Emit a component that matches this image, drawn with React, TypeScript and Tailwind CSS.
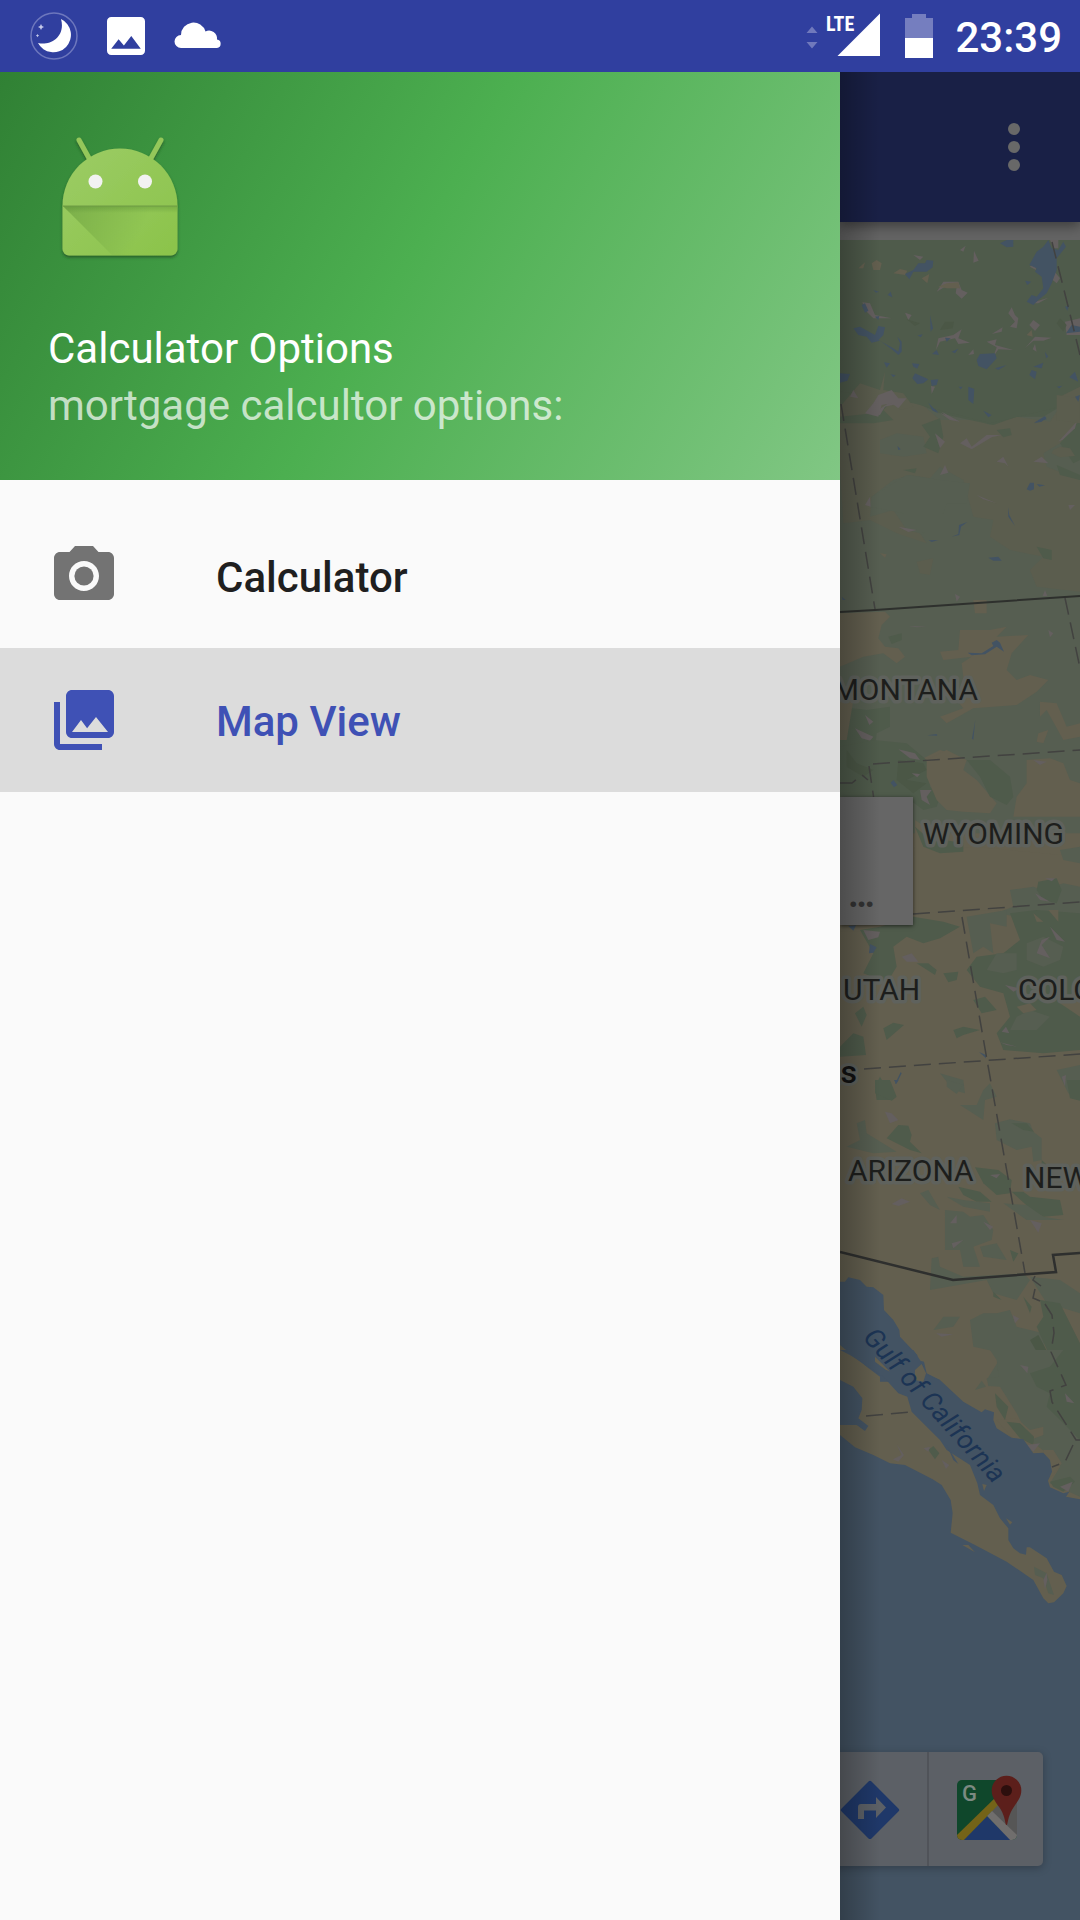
import React from "react";

const FOREST = "#4f5b4b";
const DEEP = "#4b5746";
const SAGE = "#565e51";
const OLIVE = "#5b5d4e";
const TAN = "#635f4f";
const WATER = "#435363";
const ROCK = "#645f5f";

type Patch = [fill: string, points: string];
type Tile = { x: number; y: number; patches: Patch[] };

/* Terrain is stored per tile, at three units to the pixel. */
const tiles: Tile[] = [
  {
    x: 830,
    y: 400,
    patches: [
      [SAGE, "0,-90 60,-60 120,-20 250,-60 380,-20 520,-30 640,-60 750,-40 750,1300 0,1300"],
      [OLIVE, "30,-30 150,-110 160,-50 250,-10 330,60 440,60 480,75 560,50 660,65 690,20 670,-50 690,-90 750,-70 750,100 690,130 640,160 650,200 750,240 750,575 620,560 600,510 640,470 540,450 480,410 490,360 430,350 400,240 330,200 300,235 240,225 190,240 125,290 120,350 190,330 230,390 270,400 290,430 200,400 120,360 40,370 30,200"],
      [OLIVE, "260,485 310,475 300,525 270,520"],
      [SAGE, "125,290 230,225 330,240 420,250 410,310 350,310 340,340 280,400 220,340 120,320"],
      [SAGE, "150,120 200,100 280,110 290,160 220,170 150,160"],
      [FOREST, "0,-200 750,-200 750,-60 690,-90 670,-50 690,20 640,50 560,50 490,75 420,60 330,40 250,5 200,-10 160,30 190,60 130,70 30,70 30,-200"],
      [FOREST, "275,75 330,55 340,110 325,160 280,140 300,110"],
      [FOREST, "500,90 540,85 545,105 520,112"],
      [FOREST, "680,195 750,225 750,240 690,225"],
      [FOREST, "690,130 750,60 750,180 730,190 710,160"],
      [OLIVE, "670,150 690,140 720,145 735,168 690,172 665,160"],
      [FOREST, "620,440 665,450 665,480 640,475"],
      [FOREST, "175,710 215,700 215,720 185,732"],
      [FOREST, "220,210 260,205 255,220"],
      [FOREST, "30,920 110,930 180,920 180,980 140,1000 130,1080 30,1080"],
      [TAN, "30,640 165,635 180,650 155,675 145,715 165,740 205,745 225,770 200,790 160,760 100,770 30,800"],
      [TAN, "390,690 480,690 530,680 500,710 595,705 545,760 530,810 560,840 600,825 655,840 620,875 560,915 430,925 350,970 330,950 400,925 380,900 400,830 395,790 425,770 340,780 330,755 385,750"],
      [TAN, "430,600 470,600 470,640 435,640"],
      [TAN, "630,905 680,910 710,980 750,970 750,1010 700,1020 650,930 630,950"],
      [TAN, "625,1000 655,990 640,1030 620,1025"],
      [TAN, "150,460 170,463 165,473"],
      [TAN, "270,1080 330,1050 370,1062 400,1080"],
      [TAN, "30,900 70,900 50,1020 30,1020"],
      [ROCK, "105,15 190,0 210,10 165,20 150,45 110,40"],
      [ROCK, "330,38 390,65 360,60"],
      [ROCK, "390,130 410,115 425,140 470,105 515,105 485,112 425,148"],
      [ROCK, "315,100 345,125 330,145"],
      [ROCK, "685,125 740,65 735,85 700,118"],
      [ROCK, "520,170 535,200 525,190 500,185"],
      [ROCK, "635,170 655,190 610,185"],
      [ROCK, "345,195 355,218 330,225"],
      [ROCK, "440,285 500,310 460,298"],
      [ROCK, "205,380 260,390 235,396"],
      [ROCK, "715,315 735,315 720,330"],
      [ROCK, "105,315 120,290 122,320"],
      [ROCK, "235,678 290,680 260,682"],
      [ROCK, "375,582 390,590 380,605"],
      [ROCK, "655,690 670,700 660,712"],
      [ROCK, "75,985 130,1010 120,1022 95,1015"],
      [ROCK, "105,945 130,965 118,975"],
      [ROCK, "215,1045 265,1060 280,1080 240,1070"],
      [ROCK, "645,570 652,588 638,588"],
      [WATER, "297,10 325,37 308,28"],
      [WATER, "612,68 645,48 650,58"],
      [WATER, "465,37 484,42 475,50"],
      [WATER, "202,138 212,148 205,150"],
      [WATER, "590,268 600,248 612,248 612,268 600,272"],
      [WATER, "620,252 645,256 628,260"],
      [WATER, "534,322 538,345 555,378 535,350"],
      [WATER, "365,410 385,402 387,375 412,366 393,380 388,405"],
      [WATER, "296,421 325,420 305,426"],
      [WATER, "475,473 505,470 515,482 490,482"],
      [WATER, "413,758 455,760 490,738 485,728 500,720 510,728 522,755 500,740 465,763 425,766"],
      [WATER, "436,960 430,1020 426,1015"],
      [WATER, "292,1006 320,1002 322,1007"],
      [WATER, "35,590 47,600 38,600"],
    ],
  },
  {
    x: 830,
    y: 70,
    patches: [
      [FOREST, "0,510 750,510 750,950 680,985 690,1010 480,1060 250,1000 0,960"],
      [OLIVE, "30,1010 90,940 150,960 165,905 160,960 220,970 250,1010 210,1020 190,990 130,1030 30,1040"],
      [OLIVE, "680,975 750,985 750,1060 680,1050"],
      [ROCK, "250,555 280,560 270,570"],
      [ROCK, "390,540 407,527 400,545"],
      [ROCK, "432,542 440,560 446,572 430,578"],
      [ROCK, "320,665 340,635 385,635 395,660 413,668 395,686 377,670 380,650 345,650"],
      [ROCK, "97,697 120,700 135,735 185,745 130,745 110,725"],
      [ROCK, "225,728 245,735 235,750"],
      [ROCK, "318,840 325,805 370,795 395,778 385,805 420,818 385,822 375,805 330,815"],
      [ROCK, "485,792 518,772 515,785"],
      [ROCK, "545,712 555,735 565,745 560,775 540,770 555,755 535,730"],
      [ROCK, "470,815 500,808 495,825 550,840 505,838 490,860 500,832"],
      [ROCK, "610,750 630,765 615,783 598,765"],
      [ROCK, "585,835 615,800 665,803 640,812 610,812"],
      [ROCK, "705,755 750,745 750,795 710,795"],
      [ROCK, "660,510 685,510 685,535 670,535"],
      [ROCK, "600,590 615,570 618,600"],
      [ROCK, "670,600 690,625 680,640 668,630"],
      [ROCK, "600,700 655,683 625,700"],
      [ROCK, "145,975 185,960 205,985 230,985 205,1015 185,1000 155,1005 145,1040 105,1030 130,1000"],
      [ROCK, "60,980 70,960 85,985"],
      [ROCK, "303,948 315,950 305,972"],
      [ROCK, "335,1025 390,1055 355,1045"],
      [ROCK, "415,855 430,838 432,852"],
      [ROCK, "615,822 620,845 608,838"],
      [TAN, "125,580 140,570 155,580 150,600 130,600"],
      [TAN, "190,610 210,597 232,602 225,615"],
      [TAN, "275,625 298,612 292,640"],
      [TAN, "325,650 350,640 385,637 390,655 350,655"],
      [TAN, "85,595 105,577 100,595"],
      [TAN, "590,795 605,780 608,800"],
      [DEEP, "330,780 345,755 372,755 368,775"],
      [DEEP, "230,748 270,760 255,768"],
      [DEEP, "680,760 690,745 710,765 700,785"],
      [WATER, "225,612 250,600 265,580 285,580 290,570 310,572 308,592 290,605 250,605 238,628"],
      [WATER, "510,520 530,510 550,510 550,530 530,532"],
      [WATER, "620,545 640,530 655,510 665,535 685,540 700,515 708,530 680,565 680,600 665,640 650,670 625,690 610,705 590,695 605,675 620,680 640,655 635,620 615,605 620,595 598,585"],
      [WATER, "70,775 90,770 135,795 145,768 165,772 160,795 145,810 190,835 205,845 210,820 202,800 215,815 215,845 205,855 185,838 150,812 125,818 110,800 85,795"],
      [WATER, "440,870 450,852 495,850 500,865 470,898 445,888"],
      [WATER, "495,895 530,885 505,900"],
      [WATER, "95,705 105,700 115,722 105,728"],
      [WATER, "300,735 309,775 302,785"],
      [WATER, "135,740 148,738 145,750"],
      [WATER, "130,660 147,665 138,668"],
      [WATER, "173,675 182,665 187,682"],
      [WATER, "585,632 604,635 592,645"],
      [WATER, "162,877 180,880 170,893"],
      [WATER, "246,880 268,882 262,896 250,890"],
      [WATER, "30,910 60,912 52,932 30,938"],
      [WATER, "247,925 255,910 295,928 280,940 262,942"],
      [WATER, "302,930 325,928 320,945 305,948"],
      [WATER, "415,950 433,957 430,1002 415,990"],
      [WATER, "295,998 325,1030 308,1022"],
      [WATER, "460,1022 485,1035 475,1042"],
      [WATER, "598,915 605,900 620,905 615,928"],
      [WATER, "718,922 735,905 745,935"],
      [WATER, "306,852 320,840 327,855"],
      [WATER, "345,803 362,805 350,815"],
      [WATER, "263,796 278,793 272,802"],
      [WATER, "365,845 385,836 375,850"],
      [WATER, "645,845 655,860 648,865"],
      [WATER, "610,890 640,878 635,895"],
      [WATER, "705,710 718,705 712,722"],
      [WATER, "708,790 725,765 750,770 750,785"],
      [WATER, "735,980 750,975 745,995"],
      [WATER, "612,1060 650,1040 635,1055"],
      [WATER, "386,950 398,950 392,958"],
      [WATER, "182,913 197,915 190,922"],
      [WATER, "680,950 697,947 688,955"],
    ],
  },
  {
    x: 830,
    y: 740,
    patches: [
      [TAN, "30,560 0,1200 750,1200 750,320 255,320 255,520"],
      [FOREST, "30,20 130,0 230,10 290,60 300,140 330,170 320,200 280,210 240,180 180,170 30,170"],
      [TAN, "290,60 350,30 410,60 400,90 440,120 500,190 480,220 400,215 350,210 320,180 290,110"],
      [FOREST, "410,60 480,60 540,110 550,170 530,195 480,170 450,110"],
      [TAN, "590,60 660,55 700,70 720,120 750,130 750,230 640,230 550,230 560,170 590,130"],
      [TAN, "255,240 300,270 360,330 430,320 750,350 750,500 255,520"],
      [SAGE, "600,480 550,500 540,450 610,440 640,450 700,430 750,440 750,370 700,360 690,330 750,320 750,560 500,520"],
      [FOREST, "625,425 680,415 695,450 680,490 640,480 620,450"],
      [FOREST, "255,260 290,290 400,310 400,335 330,340 280,320"],
      [FOREST, "150,560 250,530 340,545 390,560 330,595 280,610 230,590 190,620 200,680 170,730 100,700 130,640 90,570"],
      [SAGE, "410,530 530,510 530,560 480,550 490,640 460,620 430,640"],
      [FOREST, "540,520 620,510 750,520 750,930 640,940 520,930 500,880 540,830 520,760 450,740 410,690 440,650 520,640 570,600"],
      [SAGE, "560,830 600,810 660,830 620,870 540,870"],
      [SAGE, "590,610 640,590 700,620 690,660 640,680 590,660"],
      [SAGE, "500,640 560,640 560,690 520,700 470,690"],
      [TAN, "610,520 640,545 620,545"],
      [TAN, "655,510 685,510 685,545"],
      [TAN, "560,800 600,790 620,810 580,820"],
      [TAN, "690,790 750,740 750,830"],
      [FOREST, "340,700 385,695 380,720 355,727"],
      [FOREST, "260,670 295,670 320,690 315,705"],
      [FOREST, "160,865 190,848 222,855 170,900"],
      [FOREST, "370,870 400,860 450,870 400,885 380,895"],
      [FOREST, "430,780 465,770 500,810 455,820"],
      [FOREST, "30,920 70,880 100,890 108,945 30,950"],
      [FOREST, "75,820 100,800 110,825 95,860"],
      [FOREST, "135,1040 150,1010 180,1060 180,1080 140,1080"],
      [SAGE, "330,1000 400,1020 405,1060 370,1050"],
      [SAGE, "680,990 750,975 750,1080 715,1060"],
      [DEEP, "50,30 80,70 130,90 100,110 50,80"],
      [DEEP, "205,60 280,70 290,90 230,120 290,130 250,160 200,120"],
      [ROCK, "205,28 255,40 270,60 240,55"],
      [ROCK, "270,150 305,150 290,170 300,195 275,180"],
      [ROCK, "245,100 270,102 262,112"],
      [ROCK, "215,650 245,640 265,665 230,665"],
      [ROCK, "100,570 150,575 145,592 115,600"],
      [ROCK, "615,460 660,485 630,480"],
      [ROCK, "660,560 705,605 680,600"],
      [ROCK, "620,640 635,600 660,590 635,615 660,655"],
      [ROCK, "525,735 570,745 550,755"],
      [ROCK, "510,907 562,920 530,915"],
      [ROCK, "515,875 528,860 538,880"],
      [ROCK, "645,415 675,415 665,424"],
      [ROCK, "695,1010 708,1005 705,1040"],
      [ROCK, "610,60 650,65 630,75"],
      [WATER, "182,128 190,120 202,135 192,142"],
      [WATER, "55,558 78,556 70,572"],
      [WATER, "120,612 140,622 130,638 117,640"],
      [WATER, "195,1032 212,996 215,1000 200,1030"],
      [WATER, "447,936 468,945 468,955"],
    ],
  },
  {
    x: 830,
    y: 1080,
    patches: [
      [FOREST, "135,0 180,0 200,50 185,62 135,40"],
      [FOREST, "170,175 205,135 235,137 245,165 240,185 275,220 240,210"],
      [SAGE, "50,200 90,180 80,130 105,120 110,160 200,215 130,220"],
      [SAGE, "350,0 400,15 380,42 350,20"],
      [SAGE, "390,75 440,75 460,30 480,10 500,50 465,60 460,120"],
      [SAGE, "495,130 540,118 600,130 610,155 635,175 635,240 610,245 605,200 560,210 500,180"],
      [FOREST, "545,130 590,130 612,155 580,150"],
      [FOREST, "710,0 750,0 750,62 720,55"],
      [FOREST, "435,262 505,270 545,300 540,340 500,345 460,310"],
      [FOREST, "385,320 450,335 485,365 440,365 400,345"],
      [FOREST, "545,335 580,335 600,350 690,360 700,405 640,410 605,390"],
      [FOREST, "635,240 690,290 635,280"],
      [SAGE, "520,370 590,375 640,410 700,420 590,420"],
      [SAGE, "270,340 295,330 330,390 300,375"],
      [SAGE, "345,390 400,395 420,410 460,405 490,450 485,480 430,500 450,560 400,560 390,510 345,510"],
      [SAGE, "350,350 400,360 480,370 480,395 400,380"],
      [SAGE, "305,535 325,530 330,560 400,590 580,580 600,600 560,660 490,640 470,600 300,630"],
      [SAGE, "420,720 460,700 500,700 540,690 560,740 640,760 650,900 470,900 520,820 430,800"],
      [SAGE, "310,750 340,710 390,710 370,740"],
      [SAGE, "450,500 500,490 530,540 460,530"],
      [FOREST, "540,510 565,520 550,545"],
      [FOREST, "490,635 515,660 490,650"],
      [FOREST, "580,650 605,680 600,700"],
      [SAGE, "600,590 690,600 750,640 750,700 650,670"],
      [FOREST, "630,660 690,670 750,790 750,900 640,900 660,830 620,740 640,710"],
      [DEEP, "600,780 625,765 660,830 640,850"],
      [ROCK, "185,372 215,355 240,365 205,378"],
      [ROCK, "165,95 185,100 205,120 180,130"],
      [ROCK, "360,430 380,405 380,430"],
      [ROCK, "365,490 400,480 370,505"],
      [ROCK, "480,285 510,282 500,295"],
      [ROCK, "600,420 635,430 625,458"],
      [ROCK, "460,425 490,440 480,450"],
      [ROCK, "318,760 370,763 335,770"],
      [ROCK, "548,705 568,715 555,730"],
      [WATER, "192,0 206,0 198,12"],
      [WATER, "30,605 45,605 55,592 90,600 110,620 130,622 160,645 162,690 190,720 208,750 210,770 262,825 262,840 282,845 290,880 330,900 330,905 150,905 150,890 110,860 60,820 30,795"],
      [TAN, "135,825 150,840 180,870 165,875 137,845"],
    ],
  },
  {
    x: 830,
    y: 1350,
    patches: [
      [SAGE, "445,0 480,0 500,30 510,110 560,190 600,270 650,310 690,350 660,400 750,440 750,0"],
      [SAGE, "470,85 510,80 510,110 475,108"],
      [SAGE, "435,120 455,92 468,110"],
      [TAN, "500,210 560,205 600,240 640,230 640,255 600,270 585,300 545,262"],
      [FOREST, "495,130 535,170 525,210 500,170"],
      [FOREST, "530,215 570,220 612,260 610,285 570,265"],
      [FOREST, "600,70 660,50 700,0 750,0 750,270 700,220 650,170 660,130 620,110"],
      [TAN, "640,300 670,300 695,340 670,375 655,385"],
      [FOREST, "660,395 720,380 735,395 700,425 670,410"],
      [ROCK, "570,45 595,50 592,70"],
      [ROCK, "705,130 733,160 710,155"],
      [ROCK, "590,285 630,280 610,305"],
      [ROCK, "690,410 728,395 715,425"],
      [WATER, "30,0 60,15 130,60 160,80 205,130 232,140 245,185 290,230 330,270 350,300 420,345 442,400 450,435 490,465 510,505 535,535 535,570 550,595 570,610 588,614 590,592 600,592 650,625 672,665 695,675 710,708 700,730 672,757 655,760 640,745 610,690 530,635 435,585 362,548 368,490 362,450 335,405 308,388 225,345 180,340 130,315 75,292 30,255 0,255 0,1720 750,1720 750,448 708,440 718,425 700,430 660,412 654,392 666,365 660,330 640,308 610,310 580,268 545,263 500,235 490,210 492,187 465,178 455,187 400,155 330,90 290,75 270,30 250,0"],
      [TAN, "255,60 275,42 288,70 280,95 255,90"],
      [TAN, "135,20 180,65 165,58 135,35"],
      [WATER, "30,90 70,110 97,145 95,180 85,205 115,228 105,243 80,225 30,225"],
      [WATER, "350,285 385,342 370,330"],
      [TAN, "397,585 415,585 435,607"],
      [TAN, "457,402 470,405 462,423"],
      [TAN, "528,505 547,517 540,524"],
      [FOREST, "295,300 310,288 328,310 315,328"],
      [ROCK, "200,283 222,315 205,335 188,328 215,315"],
      [ROCK, "280,295 300,290 295,305"],
      [ROCK, "335,330 358,345 348,357"],
      [SAGE, "612,650 650,670 672,735 655,730 640,685 615,675"],
      [ROCK, "650,668 652,690 645,718 640,690"],
    ],
  },
];

const labelClass = "fill-[#1d1e1c] stroke-[#5f625d] text-[30px] [paint-order:stroke] [stroke-width:7px]";

function MapCanvas() {
  return (
    <svg
      className="absolute inset-0 h-full w-full font-[Roboto,sans-serif]"
      viewBox="840 240 240 1680"
      preserveAspectRatio="xMinYMin slice"
      role="img"
      aria-label="Map of the western United States"
    >
      <rect x="840" y="240" width="240" height="1680" fill={TAN} />
      {tiles.map((tile) => (
        <g key={tile.y} transform={`translate(${tile.x} ${tile.y}) scale(0.33333)`}>
          {tile.patches.map(([fill, points], i) => (
            <polygon key={i} fill={fill} points={points} />
          ))}
        </g>
      ))}
      <g fill="none" stroke="#424240" strokeWidth="1.5" strokeDasharray="17 8">
        <path d="M1052 242L1069 310L1080 355" />
        <path d="M841 404L875 609" />
        <path d="M1065 598L1080 668" />
        <path d="M873 764L1080 750M840 783H852L862 775L868 780M869 766L874 800" />
        <path d="M913 914L1080 902M962 917L987 1060L1025 1273" />
        <path d="M864 1069L1080 1054" />
        <path d="M866 1416L912 1412" />
        <path d="M1035 1276L1033 1280L1041 1286M1035 1289L1033 1298L1040 1301M1045 1304L1052 1315L1054 1333L1051 1352L1066 1385L1050 1391L1052 1402L1076 1440H1080M1073 1445L1065 1462L1052 1467" />
      </g>
      <path d="M840 612L875 610L1080 596" fill="none" stroke="#2e302d" strokeWidth="2" />
      <path d="M840 1252L953 1280L1056 1272L1053 1255L1080 1253" fill="none" stroke="#2e2f2e" strokeWidth="2.5" />
      <g strokeLinejoin="round">
        <text className={labelClass} x="978" y="700" textAnchor="end">MONTANA</text>
        <text className={labelClass} x="923" y="844">WYOMING</text>
        <text className={labelClass} x="843" y="1000">UTAH</text>
        <text className={labelClass} x="1018" y="1000">COLORADO</text>
        <text className="fill-[#111] stroke-[#5f625d] text-[32px] font-medium [paint-order:stroke] [stroke-width:6px]" x="857" y="1083" textAnchor="end">Las Vegas</text>
        <text className={labelClass} x="848" y="1181">ARIZONA</text>
        <text className={labelClass} x="1024" y="1188">NEW MEXICO</text>
        <text className="fill-[#1c3454] text-[27px] italic" transform="translate(862 1338) rotate(48)">Gulf of California</text>
      </g>
    </svg>
  );
}

function StatusBar() {
  return (
    <header className="flex h-[72px] shrink-0 items-center bg-[#303f9f] pl-[30px] pr-[18px] text-white">
      <svg className="h-12 w-12" viewBox="30 12 48 48" aria-hidden="true">
        <circle cx="54" cy="36" r="23" fill="none" stroke="#6d77bd" strokeWidth="1.5" />
        <path d="M61 19A17.5 17.5 0 1 1 38 43C50 46 66 37 61 19Z" fill="#fff" />
        <path d="M41 24l1 2 2 1-2 1-1 2-1-2-2-1 2-1zM37.500 34l.6 1 1 .6-1 .6-.6 1-.6-1-1-.6 1-.6z" fill="#c5caea" />
      </svg>
      <svg className="ml-[29px] h-[38px] w-[38px]" viewBox="3 3 18 18" fill="#fff" aria-hidden="true">
        <path d="M21 19V5c0-1.100-.9-2-2-2H5c-1.100 0-2 .9-2 2v14c0 1.100.9 2 2 2h14c1.100 0 2-.9 2-2zM8.500 13.500l2.500 3.010L14.500 12l4.500 6H5l3.500-4.500z" />
      </svg>
      <svg className="ml-[29px] h-12 w-12" viewBox="174 11 48 48" aria-hidden="true">
        <path d="M181 47a6.500 6.500 0 0 1 0-13A12.500 12.500 0 0 1 205.500 30.500A8 8 0 0 1 217 38.500A4.300 4.300 0 0 1 217 47Z" fill="#fff" />
      </svg>
      <div className="ml-auto flex items-center">
        <svg className="h-12 w-[76px]" viewBox="805 12 76 48" aria-label="LTE signal">
          <path d="M812 26.500l5.500 6.500h-11zM812 48.500l5.500-6.500h-11z" fill="#7079bc" />
          <path d="M880 13.500V56H837.500Z" fill="#fff" />
          <text x="826" y="31" fill="#fff" className="text-[20px] font-bold font-['Liberation_Sans_Narrow','Roboto_Condensed',Roboto,sans-serif]">LTE</text>
        </svg>
        <svg className="ml-6 h-12 w-7" viewBox="905 12 28 48" aria-hidden="true">
          <path d="M905 18h7v-4h14v4h7v20h-28z" fill="#757ebf" />
          <path d="M905 38h28v20h-28z" fill="#fff" />
        </svg>
        <time className="ml-[22px] pt-1 text-[42px] font-medium leading-[48px]">23:39</time>
      </div>
    </header>
  );
}

function AndroidLogo() {
  return (
    <svg className="h-36 w-36" viewBox="48 125 144 144" aria-hidden="true">
      <defs>
        <linearGradient id="robot" x1="0" y1="0" x2="1" y2="1">
          <stop offset="0" stopColor="#9ccc65" />
          <stop offset="1" stopColor="#8bc34a" />
        </linearGradient>
        <linearGradient id="fold" gradientUnits="userSpaceOnUse" x1="70" y1="206" x2="138" y2="238">
          <stop offset="0" stopColor="#558b2f" stopOpacity="0.4" />
          <stop offset="1" stopColor="#558b2f" stopOpacity="0" />
        </linearGradient>
        <linearGradient id="lip" x1="0" y1="0" x2="0" y2="1">
          <stop offset="0" stopColor="#33691e" stopOpacity="0.25" />
          <stop offset="1" stopColor="#33691e" stopOpacity="0" />
        </linearGradient>
        <filter id="drop" x="-10%" y="-10%" width="120%" height="125%">
          <feDropShadow dx="0" dy="2" stdDeviation="1.5" floodColor="#1b3d1c" floodOpacity="0.6" />
        </filter>
      </defs>
      <g filter="url(#drop)">
        <path d="M79 140L90 160M161 140L150 160" stroke="#94c75a" strokeWidth="5" strokeLinecap="round" />
        <path d="M62.500 206A57.500 57.500 0 0 1 177.500 206V249a6.500 6.500 0 0 1-6.500 6.500H69a6.500 6.500 0 0 1-6.500-6.500Z" fill="url(#robot)" />
      </g>
      <path d="M63 206H177V216L150 255H112Z" fill="url(#fold)" />
      <path d="M63 206H177V213H69Z" fill="url(#lip)" />
      <path d="M62.500 206H177.500" stroke="#6f9c44" strokeWidth="1" />
      <circle cx="95.500" cy="181.500" r="7" fill="#f2f2f2" />
      <circle cx="145" cy="181.500" r="7" fill="#f2f2f2" />
    </svg>
  );
}

const rowClass = "flex h-36 w-full items-center gap-24 px-12 text-left text-[42px] font-medium leading-[48px]";

function Drawer() {
  return (
    <aside className="flex w-[77.778%] shrink-0 flex-col bg-[#fafafa]">
      <div className="flex h-[408px] flex-col justify-between bg-[linear-gradient(120deg,#2e7d32_0%,#4caf50_50%,#81c784_100%)] bg-[length:100%_480px] bg-bottom px-12 pb-[46px] pt-[53px]">
        <AndroidLogo />
        <div className="text-[42px] leading-[57px]">
          <h1 className="text-white">Calculator Options</h1>
          <p className="text-white/70">mortgage calcultor options:</p>
        </div>
      </div>
      <nav className="pt-6" aria-label="Calculator options">
        <button type="button" className={`${rowClass} text-[#1f1f1f]`}>
          <svg className="h-[72px] w-[72px]" viewBox="0 0 24 24" fill="#737373" aria-hidden="true">
            <circle cx="12" cy="12" r="3.200" />
            <path d="M9 2L7.170 4H4c-1.100 0-2 .9-2 2v12c0 1.100.9 2 2 2h16c1.100 0 2-.9 2-2V6c0-1.100-.9-2-2-2h-3.170L15 2H9zm3 15c-2.760 0-5-2.240-5-5s2.240-5 5-5 5 2.240 5 5-2.240 5-5 5z" />
          </svg>
          <span className="pt-1">Calculator</span>
        </button>
        <button type="button" aria-current="page" className={`${rowClass} bg-[#dcdcdc] text-[#3f51b5]`}>
          <svg className="h-[72px] w-[72px]" viewBox="0 0 24 24" fill="currentColor" aria-hidden="true">
            <path d="M22 16V4c0-1.100-.9-2-2-2H8c-1.100 0-2 .9-2 2v12c0 1.100.9 2 2 2h12c1.100 0 2-.9 2-2zm-11-4l2.030 2.710L16 11l4 5H8l3-4zM2 6v14c0 1.100.9 2 2 2h14v-2H4V6H2z" />
          </svg>
          <span className="pt-1">Map View</span>
        </button>
      </nav>
    </aside>
  );
}

function MapToolbar() {
  return (
    <div className="absolute bottom-[54px] right-[37px] flex rounded-[5px] bg-[#5c6066] shadow-[0_2px_8px_rgba(0,0,0,0.25)]">
      <button type="button" aria-label="Directions" className="flex h-[114px] w-[114px] items-center justify-center">
        <svg className="h-[60px] w-[60px]" viewBox="840 1779 60 60" aria-hidden="true">
          <path d="M868.500 1781.600a2 2 0 0 1 3 0L898.400 1808.500a2 2 0 0 1 0 3L871.500 1838.400a2 2 0 0 1-3 0L841.600 1811.500a2 2 0 0 1 0-3Z" fill="#1f3869" />
          <path d="M858 1819V1807a3 3 0 0 1 3-3h15v-7l10 10.500-10 10.500v-7.500h-12v8.500Z" fill="#5c6066" />
        </svg>
      </button>
      <button type="button" aria-label="Open in Google Maps" className="flex h-[114px] w-[116px] items-center justify-center border-l-2 border-[#505359]">
        <svg className="h-[72px] w-[72px]" viewBox="950 1773 72 72" aria-hidden="true">
          <defs>
            <clipPath id="tile"><rect x="957" y="1780" width="60" height="60" rx="5" /></clipPath>
          </defs>
          <g clipPath="url(#tile)">
            <path d="M957 1780h60v60h-60z" fill="#0f472b" />
            <path d="M1000 1797L1017 1785V1836L990 1810Z" fill="#565656" />
            <path d="M962 1841L987 1816L1012 1841Z" fill="#1f3869" />
            <path d="M955 1837L997 1796L1003 1800L961 1843H955Z" fill="#746318" />
            <path d="M987 1816L992 1811L1020 1838V1842H1012Z" fill="#706e6d" />
          </g>
          <text x="962" y="1801" fill="#7b8a82" className="text-[22px] font-medium font-[Roboto,sans-serif]">G</text>
          <path d="M1006.500 1825c-1.500 0-1-8-6-16c-4-6-8.800-11-8.800-18.500a14.800 14.800 0 0 1 29.600 0c0 7.500-5 12.500-8.800 18.500c-5 8-4.500 16-6 16Z" fill="#5c1f1b" />
          <circle cx="1006.500" cy="1790.500" r="5.500" fill="#2c0f0d" />
        </svg>
      </button>
    </div>
  );
}

export default function App() {
  return (
    <div className="flex min-h-screen flex-col overflow-hidden font-[Roboto,sans-serif]">
      <StatusBar />
      <div className="flex grow">
        <Drawer />
        <main className="relative flex min-w-0 grow flex-col overflow-hidden bg-[#646464]">
          <div className="relative flex h-[150px] items-center justify-end bg-[#192046] pr-[30px] shadow-[0_4px_12px_rgba(0,0,0,0.4)]">
            <button type="button" aria-label="More options" className="flex h-[72px] w-[72px] flex-col items-center justify-center gap-1.5">
              <i className="h-3 w-3 rounded-full bg-[#686868]" />
              <i className="h-3 w-3 rounded-full bg-[#686868]" />
              <i className="h-3 w-3 rounded-full bg-[#686868]" />
            </button>
          </div>
          <section className="relative mt-[18px] grow overflow-hidden">
            <MapCanvas />
            <div className="absolute left-0 top-[557px] flex h-32 w-[73px] items-end bg-[#666] pb-3 pl-2 shadow-[0_1px_4px_rgba(0,0,0,0.6)]">
              <span className="text-[36px] font-bold leading-[36px] text-[#333]">…</span>
            </div>
            <MapToolbar />
          </section>
          <div className="pointer-events-none absolute inset-y-0 left-0 w-10 bg-gradient-to-r from-black/25 to-transparent" />
        </main>
      </div>
    </div>
  );
}
